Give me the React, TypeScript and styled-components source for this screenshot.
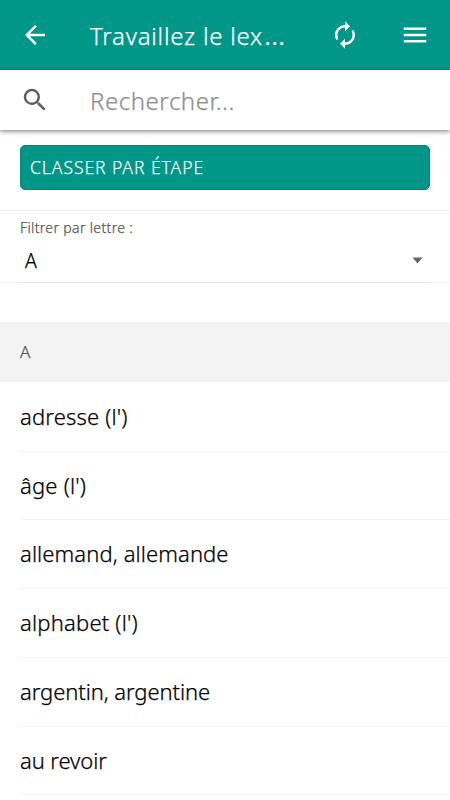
import React from "react";
import styled, { createGlobalStyle } from "styled-components";

const GlobalStyle = createGlobalStyle`
  * { box-sizing: border-box; }
  body {
    margin: 0;
    background: #fff;
    color: #000;
    font-family: "Noto Sans", sans-serif;
    font-weight: 300;
    -webkit-text-stroke: 0.25px currentColor;
    overflow: hidden;
  }
`;

const Screen = styled.main`
  display: flex;
  flex-direction: column;
  height: 800px;
  overflow: hidden;
  background: #fff;
`;

const Top = styled.div`
  box-shadow: 0 1px 5px rgba(0, 0, 0, 0.55);
`;

const Toolbar = styled.header`
  display: flex;
  align-items: center;
  height: 70px;
  background: #009688;
  border-bottom: 1px solid #008577;
  color: #fff;
`;

const IconButton = styled.button`
  display: flex;
  flex: none;
  align-items: center;
  justify-content: center;
  width: 70px;
  height: 70px;
  padding: 0;
  border: 0;
  background: none;
  color: inherit;
`;

const Title = styled.h1`
  flex: 1;
  margin: 0;
  padding: 3px 0 0 20px;
  font-size: 24px;
  font-weight: 300;
  line-height: 32px;
  letter-spacing: 0.75px;
  white-space: nowrap;
`;

const Ellipsis = styled.span`
  font-size: 29px;
  line-height: 0;
  letter-spacing: 0;
  margin-left: 1px;
`;

const SearchBar = styled.label`
  display: flex;
  align-items: center;
  height: 60px;
  background: #fff;
  color: #5e5e5e;
`;

const SearchInput = styled.input`
  flex: 1;
  height: 40px;
  min-width: 0;
  padding: 0 20px;
  border: 0;
  outline: 0;
  background: none;
  font: 300 24px "Noto Sans", sans-serif;
  letter-spacing: 0.55px;
  &::placeholder { color: #8f8f8f; opacity: 1; }
`;

const SortButton = styled.button`
  flex: none;
  height: 45px;
  margin: 15px 20px 20px;
  padding: 0 9px 2px;
  border: 1px solid #008577;
  border-radius: 5px;
  background: #009688;
  color: #f0f8f7;
  font: 300 17.5px "Noto Sans", sans-serif;
  letter-spacing: 0.95px;
  text-align: left;
  text-transform: uppercase;
`;

const Filter = styled.section`
  flex: none;
  height: 73px;
  padding: 7px 20px 0;
  border-top: 1px solid #f0f0f0;
  border-bottom: 1px solid #f3f3f3;
`;

const FilterLabel = styled.div`
  height: 20px;
  color: #555;
  font-size: 14px;
  line-height: 19px;
  letter-spacing: 0.35px;
`;

const Select = styled.div`
  display: flex;
  align-items: center;
  justify-content: space-between;
  height: 45px;
  padding: 0 7px 0 5px;
  border-bottom: 1px solid #e9e9e9;
  font-size: 19.5px;
`;

const SectionHeader = styled.h2`
  flex: none;
  height: 60px;
  margin: 39px 0 0;
  padding: 0 20px;
  background: #f3f3f3;
  color: #555;
  font-size: 17px;
  font-weight: 300;
  line-height: 60px;
`;

const WordList = styled.ul`
  flex: none;
  margin: 0;
  padding: 0.9px 0 0 20px;
  list-style: none;
`;

const Word = styled.li<{ $tracking: number }>`
  height: 68.75px;
  border-bottom: 1px solid #f3f3f3;
  font-size: 22px;
  line-height: 67.6px;
  letter-spacing: ${({ $tracking }) => $tracking}px;
`;

const icons = {
  back: "M20 11H7.83l5.59-5.59L12 4l-8 8 8 8 1.41-1.41L7.83 13H20z",
  refresh:
    "M12 6v3l4-4-4-4v3c-4.42 0-8 3.58-8 8 0 1.57.46 3.03 1.24 4.26L6.7 14.8c-.45-.83-.7-1.79-.7-2.8 0-3.31 2.69-6 6-6zm6.76 1.74L17.3 9.2c.44.84.7 1.79.7 2.8 0 3.31-2.69 6-6 6v-3l-4 4 4 4v-3c4.42 0 8-3.58 8-8 0-1.57-.46-3.03-1.24-4.26z",
  menu: "M3 18h18v-2H3zm0-5h18v-2H3zm0-7v2h18V6z",
  search:
    "M15.5 14h-.79l-.28-.27A6.47 6.47 0 0 0 16 9.5 6.5 6.5 0 1 0 9.5 16c1.61 0 3.09-.59 4.23-1.57l.27.28v.79l5 4.99L20.49 19zm-6 0C7.01 14 5 11.99 5 9.5S7.01 5 9.5 5 14 7.01 14 9.5 11.99 14 9.5 14z",
};

const Icon = ({ name }: { name: keyof typeof icons }) => (
  <svg width="30" height="30" viewBox="0 0 24 24" fill="currentColor" aria-hidden="true">
    <path d={icons[name]} />
  </svg>
);

const words = [
  { text: "adresse (l')", tracking: 0.17 },
  { text: "âge (l')", tracking: 0.2 },
  { text: "allemand, allemande", tracking: 0.1 },
  { text: "alphabet (l')", tracking: 0.2 },
  { text: "argentin, argentine", tracking: -0.08 },
  { text: "au revoir", tracking: -0.1 },
];

export default function App() {
  return (
    <>
      <GlobalStyle />
      <Screen>
        <Top>
          <Toolbar>
            <IconButton aria-label="Retour"><Icon name="back" /></IconButton>
            <Title>Travaillez le lex<Ellipsis>…</Ellipsis></Title>
            <IconButton aria-label="Actualiser"><Icon name="refresh" /></IconButton>
            <IconButton aria-label="Menu"><Icon name="menu" /></IconButton>
          </Toolbar>
          <SearchBar>
            <IconButton as="span"><Icon name="search" /></IconButton>
            <SearchInput placeholder="Rechercher..." />
          </SearchBar>
        </Top>
        <SortButton>Classer par étape</SortButton>
        <Filter>
          <FilterLabel>Filtrer par lettre :</FilterLabel>
          <Select>
            <span>A</span>
            <svg width="11" height="7" viewBox="0 0 11 7" fill="#666" aria-hidden="true">
              <path d="M.5 .5h10l-5 6z" />
            </svg>
          </Select>
        </Filter>
        <SectionHeader>A</SectionHeader>
        <WordList>
          {words.map(({ text, tracking }) => (
            <Word key={text} $tracking={tracking}>{text}</Word>
          ))}
        </WordList>
      </Screen>
    </>
  );
}
